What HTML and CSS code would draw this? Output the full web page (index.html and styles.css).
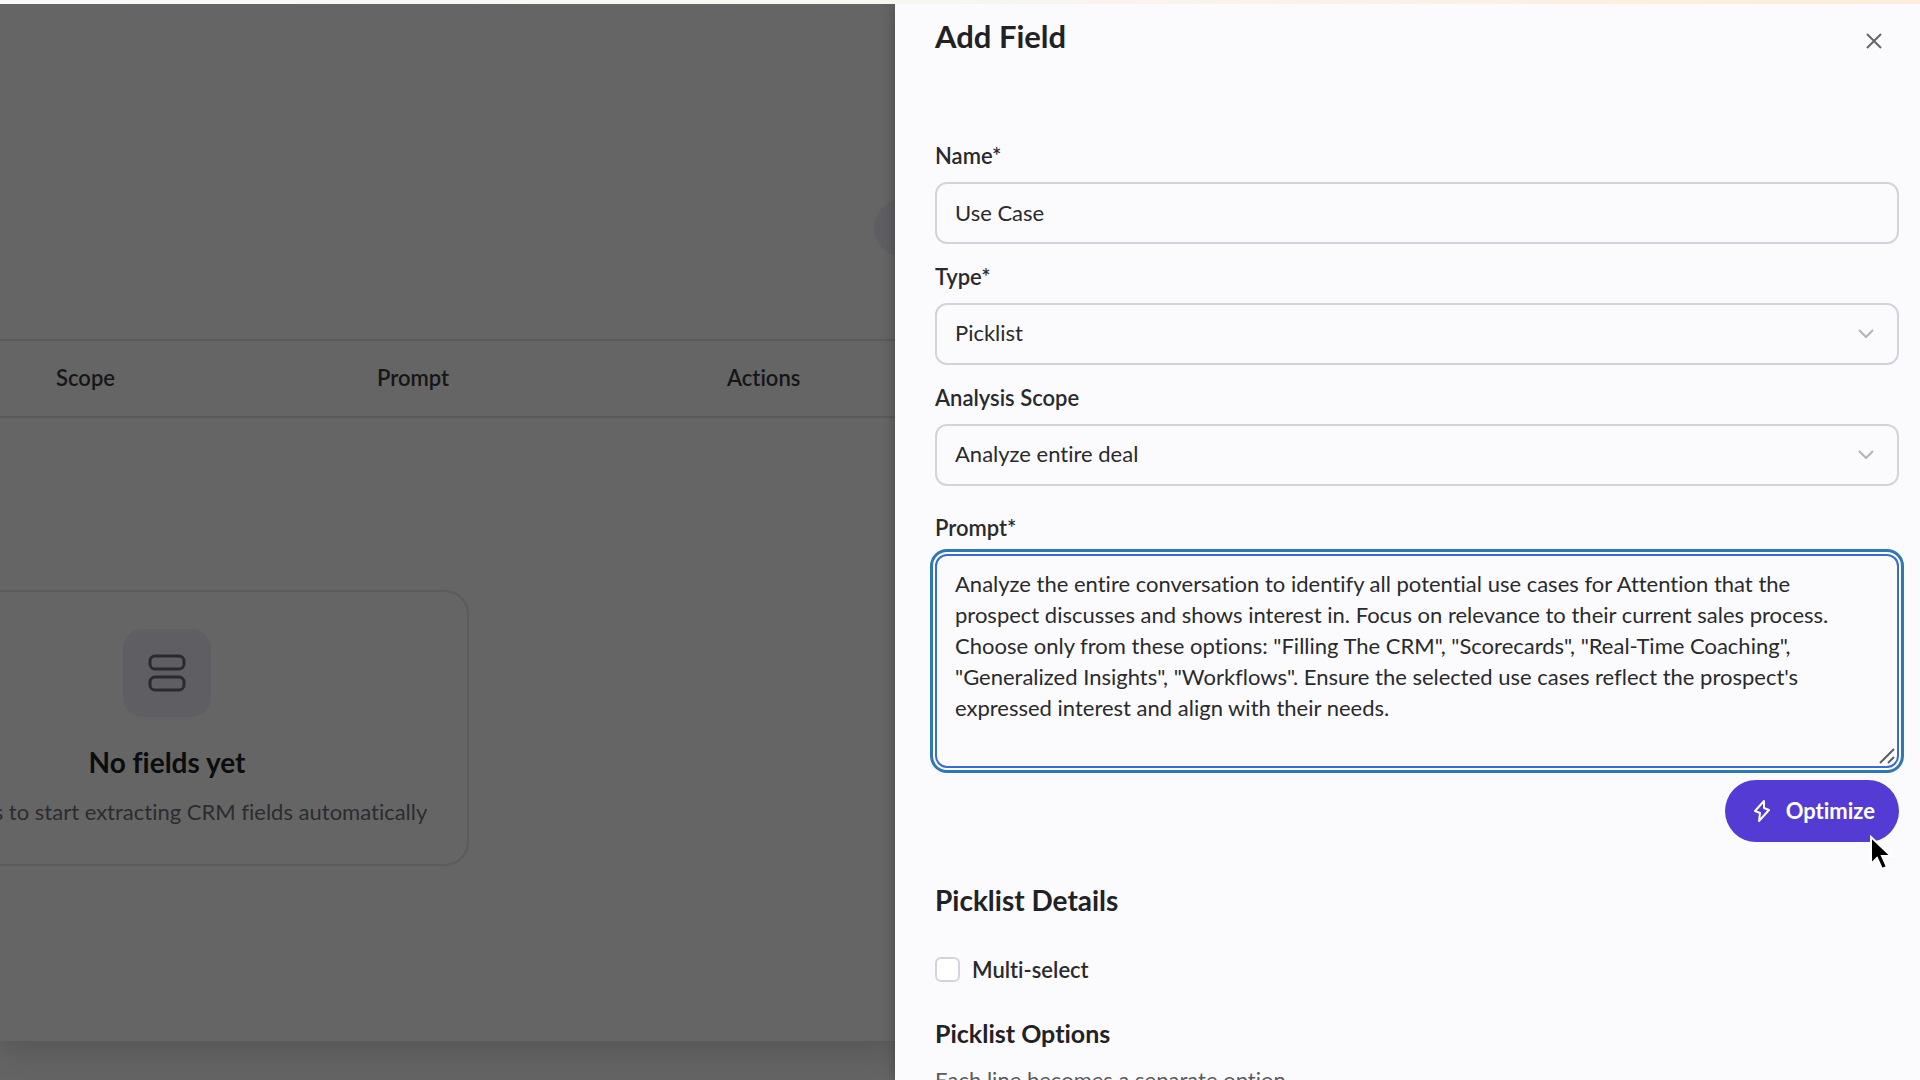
FILE: index.html
```html
<!DOCTYPE html>
<html lang="en">
<head>
    <meta charset="utf-8">
    <title>Add Field</title>
    <link rel="stylesheet" href="styles.css">
</head>
<body>
  <div class="top_strip"></div>
  <div class="layout">
    <!-- dimmed page -->
    <main class="page">
      <div class="card">
        <div class="toolbar">
          <button class="toolbar_btn" type="button" aria-label="More"></button>
        </div>
        <table class="fields_table">
          <thead>
            <tr>
              <th class="col_scope">Scope</th>
              <th class="col_prompt">Prompt</th>
              <th>Actions</th>
            </tr>
          </thead>
        </table>
        <div class="empty">
          <div class="empty_icon">
            <svg width="40" height="40" viewBox="0 0 40 40" fill="none" stroke="#2b2b2f" stroke-width="3">
              <rect x="3" y="3" width="34" height="13" rx="5"/>
              <rect x="3" y="24" width="34" height="13" rx="5"/>
            </svg>
          </div>
          <h2 class="empty_title">No fields yet</h2>
          <p class="empty_text">Add fields to start extracting CRM fields automatically</p>
        </div>
      </div>
    </main>

    <!-- drawer -->
    <aside class="drawer">
      <div class="drawer_head">
        <h1 class="drawer_title">Add Field</h1>
        <button class="close_btn" type="button" aria-label="Close">
          <svg width="16" height="16" viewBox="0 0 16 16" fill="none" stroke="#66666a" stroke-width="2">
            <path d="M1 1l14 14M15 1L1 15"/>
          </svg>
        </button>
      </div>
      <form class="form">
        <div class="field">
          <label for="name">Name*</label>
          <input class="control" id="name" type="text" value="Use Case">
        </div>
        <div class="field">
          <label for="type">Type*</label>
          <div class="control_box">
            <select class="control" id="type">
              <option>Picklist</option>
            </select>
            <svg class="chevron" width="16" height="10" viewBox="0 0 16 10" fill="none" stroke="#b4b4b8" stroke-width="2">
              <path d="M1 1l7 7 7-7"/>
            </svg>
          </div>
        </div>
        <div class="field">
          <label for="scope">Analysis Scope</label>
          <div class="control_box">
            <select class="control" id="scope">
              <option>Analyze entire deal</option>
            </select>
            <svg class="chevron" width="16" height="10" viewBox="0 0 16 10" fill="none" stroke="#b4b4b8" stroke-width="2">
              <path d="M1 1l7 7 7-7"/>
            </svg>
          </div>
        </div>
        <div class="field field_prompt">
          <label for="prompt">Prompt*</label>
          <div class="control_box">
            <textarea class="control prompt" id="prompt" rows="6" spellcheck="false">Analyze the entire conversation to identify all potential use cases for Attention that the prospect discusses and shows interest in. Focus on relevance to their current sales process. Choose only from these options: "Filling The CRM", "Scorecards", "Real-Time Coaching", "Generalized Insights", "Workflows". Ensure the selected use cases reflect the prospect's expressed interest and align with their needs.</textarea>
            <svg class="grip" width="16" height="16" viewBox="0 0 16 16" fill="none" stroke="#5f5f63" stroke-width="2">
              <path d="M1 15L15 1M9 15l6-6"/>
            </svg>
          </div>
        </div>
        <div class="actions">
          <button class="optimize_btn" type="button">
            <svg width="16" height="22" viewBox="0 0 16 22" fill="none" stroke="#fff" stroke-width="2" stroke-linejoin="round">
              <path d="M10 1L1 11l5 2-1 8 10-11-5-2z"/>
            </svg>
            Optimize
          </button>
          <svg class="cursor" width="24" height="38" viewBox="0 0 24 38">
            <path d="M2 2v27l6-6 5 11 5-2-5-11h9z" fill="#000" stroke="#fff" stroke-width="2"/>
          </svg>
        </div>
        <h2 class="section_title">Picklist Details</h2>
        <div class="check_row">
          <input class="check" id="multi" type="checkbox">
          <label for="multi">Multi-select</label>
        </div>
        <h3 class="sub_title">Picklist Options</h3>
        <p class="hint">Each line becomes a separate option.</p>
      </form>
    </aside>
  </div>
</body>
</html>
```
FILE: styles.css
```css
* {
  box-sizing: border-box;
}
body {
  margin: 0;
  height: 100vh;
  overflow: hidden;
  display: flex;
  flex-direction: column;
  font-family: Lato, "Liberation Sans", sans-serif;
  font-size: 22px;
  font-variant-ligatures: none;
  line-height: 24px;
  color: #2a2a2d;
  background: #646464;
}
h1, h2, h3, p {
  margin: 0;
}
h1, h2, h3 {
  color: #222225;
}
button, input, select, textarea {
  font: inherit;
  font-variant-ligatures: none;
  color: inherit;
}
.top_strip {
  flex: none;
  height: 4px;
  background: linear-gradient(90deg, #f7faf6, #f8f6f1 50%, #fcecd9);
}
.layout {
  flex: 1;
  min-height: 0;
  overflow: hidden;
  display: grid;
  grid-template-columns: 895fr 1025fr;
  grid-template-rows: minmax(0, 1fr);
}

/* dimmed page */
.page {
  min-width: 0;
  overflow: hidden;
  padding-bottom: 39px;
}
.card {
  height: 100%;
  background: #656565;
  box-shadow: 0 4px 32px rgba(0, 0, 0, .2);
}
.toolbar {
  display: flex;
  justify-content: flex-end;
  padding: 195px 0 82px;
}
.toolbar_btn {
  flex: none;
  width: 180px;
  height: 58px;
  margin-right: -159px;
  border: 0;
  border-radius: 29px;
  background: #5f5f63;
}
.fields_table {
  width: 100%;
  table-layout: fixed;
  border-collapse: collapse;
  color: #161618;
}
.fields_table th {
  height: 77px;
  padding: 0 0 2px 56px;
  border-top: 2px solid #5a5a5e;
  border-bottom: 2px solid #5a5a5e;
  font-weight: 600;
  text-align: left;
}
.col_scope {
  width: 321px;
}
.col_prompt {
  width: 350px;
}
.empty {
  display: flex;
  flex-direction: column;
  align-items: center;
  width: 604px;
  margin: 172px 0 0 -135px;
  padding: 37px 0 40px;
  border: 2px solid #5b5b5f;
  border-radius: 24px;
}
.empty_icon {
  display: flex;
  align-items: center;
  justify-content: center;
  width: 88px;
  height: 88px;
  border-radius: 20px;
  background: #5f5f63;
}
.empty_title {
  margin-top: 29px;
  font-size: 28px;
  line-height: 32px;
  color: #0c0c0d;
}
.empty_text {
  margin-top: 22px;
  white-space: nowrap;
  color: #2c2c30;
}

/* drawer */
.drawer {
  position: relative;
  min-width: 0;
  padding: 0 21px 0 40px;
  background: #fbfbfe;
  box-shadow: 0 0 12px rgba(0, 0, 0, .3);
}
.drawer_head {
  display: flex;
  justify-content: space-between;
  align-items: center;
  padding-top: 14px;
}
.drawer_title {
  font-size: 31px;
  line-height: 36px;
}
.close_btn {
  display: flex;
  padding: 12px 17px 2px;
  border: 0;
  background: none;
}
.form {
  display: flex;
  flex-direction: column;
  gap: 21px;
  padding-top: 90px;
}
.field {
  display: flex;
  flex-direction: column;
  gap: 14px;
}
.field label,
.check_row label {
  font-weight: 600;
}
.field_prompt {
  margin-top: 9px;
}
.control {
  display: block;
  width: 100%;
  height: 62px;
  padding: 0 18px 2px;
  border: 2px solid #d5d2de;
  border-radius: 12px;
  background: #fbfbfe;
  appearance: none;
}
.control_box {
  position: relative;
}
.chevron {
  position: absolute;
  top: 26px;
  right: 25px;
  pointer-events: none;
}
.prompt {
  height: auto;
  padding: 12px 24px 12px 18px;
  border-color: #3a6bd0;
  outline: 3px solid #2f78b4;
  outline-offset: 2px;
  line-height: 31px;
  resize: none;
}
.grip {
  position: absolute;
  right: 4px;
  bottom: 4px;
}
.actions {
  position: relative;
  display: flex;
  justify-content: flex-end;
  margin-top: -9px;
}
.optimize_btn {
  display: flex;
  align-items: center;
  gap: 16px;
  height: 62px;
  padding: 0 24px 0 29px;
  border: 0;
  border-radius: 31px;
  background: #543bd3;
  color: #fff;
  font-weight: 700;
}
.cursor {
  position: absolute;
  top: 55px;
  right: 6px;
}
.section_title {
  margin-top: 21px;
  font-size: 28px;
  line-height: 32px;
}
.check_row {
  display: flex;
  align-items: center;
  gap: 12px;
  margin-top: 20px;
}
.check {
  width: 25px;
  height: 25px;
  margin: 0;
  border: 2px solid #d5d2de;
  border-radius: 6px;
  background: #fff;
  appearance: none;
}
.sub_title {
  margin-top: 16px;
  font-size: 25px;
  line-height: 28px;
}
.hint {
  color: #5a5a60;
}
```
